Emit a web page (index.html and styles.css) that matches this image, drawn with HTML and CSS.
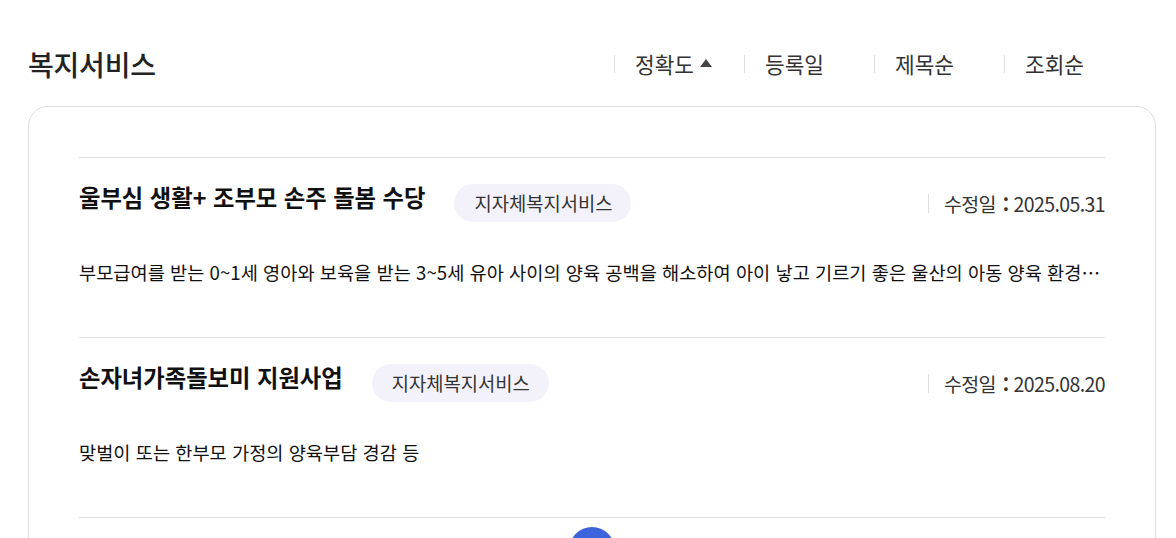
FILE: index.html
```html
<!DOCTYPE html>
<html lang="ko">
<head>
<meta charset="utf-8">
<title>복지서비스</title>
<link rel="stylesheet" href="styles.css">
</head>
<body>
<div class="page">
  <div class="head">
    <h2 class="head-title">복지서비스</h2>
    <ul class="sort">
      <li class="sort-item active">정확도 <span class="tri"></span></li>
      <li class="sort-item">등록일</li>
      <li class="sort-item">제목순</li>
      <li class="sort-item">조회순</li>
    </ul>
  </div>
  <div class="card">
    <div class="item">
      <div class="item-top">
        <div class="item-title">울부심 생활+ 조부모 손주 돌봄 수당</div>
        <span class="badge">지자체복지서비스</span>
        <div class="date">수정일 <span class="colon">:</span>2025.05.31</div>
      </div>
      <p class="desc">부모급여를 받는 0~1세 영아와 보육을 받는 3~5세 유아 사이의 양육 공백을 해소하여 아이 낳고 기르기 좋은 울산의 아동 양육 환경 조성을 위한 조부모 손주 돌봄 수당 지원</p>
    </div>
    <div class="item">
      <div class="item-top">
        <div class="item-title">손자녀가족돌보미 지원사업</div>
        <span class="badge">지자체복지서비스</span>
        <div class="date">수정일 <span class="colon">:</span>2025.08.20</div>
      </div>
      <p class="desc">맞벌이 또는 한부모 가정의 양육부담 경감 등</p>
    </div>
    <div class="pager">
      <span class="page-num">1</span>
    </div>
  </div>
</div>
</body>
</html>
```

FILE: styles.css
```css
* { box-sizing: border-box; }
html, body { margin: 0; padding: 0; background: #fff; }
body {
  font-family: "Noto Sans CJK KR", "Noto Sans", sans-serif;
  color: #222;
  overflow: hidden;
}
.page {
  width: 1128px;
  margin-left: 28px;
}
.head {
  display: flex;
  align-items: center;
  justify-content: space-between;
  padding-top: 40px;
  height: 88px;
  padding-right: 22px;
}
.head-title {
  margin: 0;
  font-size: 28px;
  font-weight: 500;
  line-height: 48px;
  color: #222;
  letter-spacing: -0.2px;
}
.sort {
  display: flex;
  list-style: none;
  margin: 0;
  padding: 0;
}
.sort-item {
  width: 130px;
  padding-left: 20px;
  font-size: 21.4px;
  line-height: 20px;
  color: #333;
  border-left: 1px solid #ddd;
  display: flex;
  align-items: center;
  height: 18px;
}
.tri {
  display: inline-block;
  margin-left: 6px;
  width: 0;
  height: 0;
  border-left: 6px solid transparent;
  border-right: 6px solid transparent;
  border-bottom: 8px solid #444;
  margin-top: -3px;
}
.card {
  margin-top: 18px;
  border: 1px solid #ddd;
  border-radius: 20px;
  padding: 50px 50px 0;
  height: 600px;
}
.item {
  border-top: 1px solid #ddd;
  padding: 26px 0 51px;
}
.item-top {
  display: flex;
  align-items: flex-start;
  height: 38px;
}
.item-title {
  font-size: 23.3px;
  font-weight: 700;
  line-height: 27px;
  color: #111;
  margin-right: 29px;
}
.badge {
  height: 38px;
  line-height: 38px;
  padding: 0 19px 0 20px;
  border-radius: 19px;
  background: #f3f2fa;
  font-size: 18.75px;
  color: #333;
}
.date {
  margin-left: auto;
  align-self: center;
  font-size: 19.5px;
  line-height: 19px;
  color: #333;
  border-left: 1px solid #ddd;
  padding-left: 15px;
  letter-spacing: -0.6px;
}
.colon { margin: 0 5px 0 2px; font-weight: 700; }
.desc {
  margin: 36px 0 0;
  font-size: 18.66px;
  line-height: 28px;
  color: #111;
  white-space: nowrap;
  overflow: hidden;
  text-overflow: ellipsis;
}
.pager {
  border-top: 1px solid #ddd;
  display: flex;
  justify-content: center;
  padding-top: 9px;
}
.page-num {
  width: 46px;
  height: 46px;
  border-radius: 50%;
  background: #3d63dd;
  color: #fff;
  display: flex;
  align-items: center;
  justify-content: center;
  font-size: 16px;
}
```
